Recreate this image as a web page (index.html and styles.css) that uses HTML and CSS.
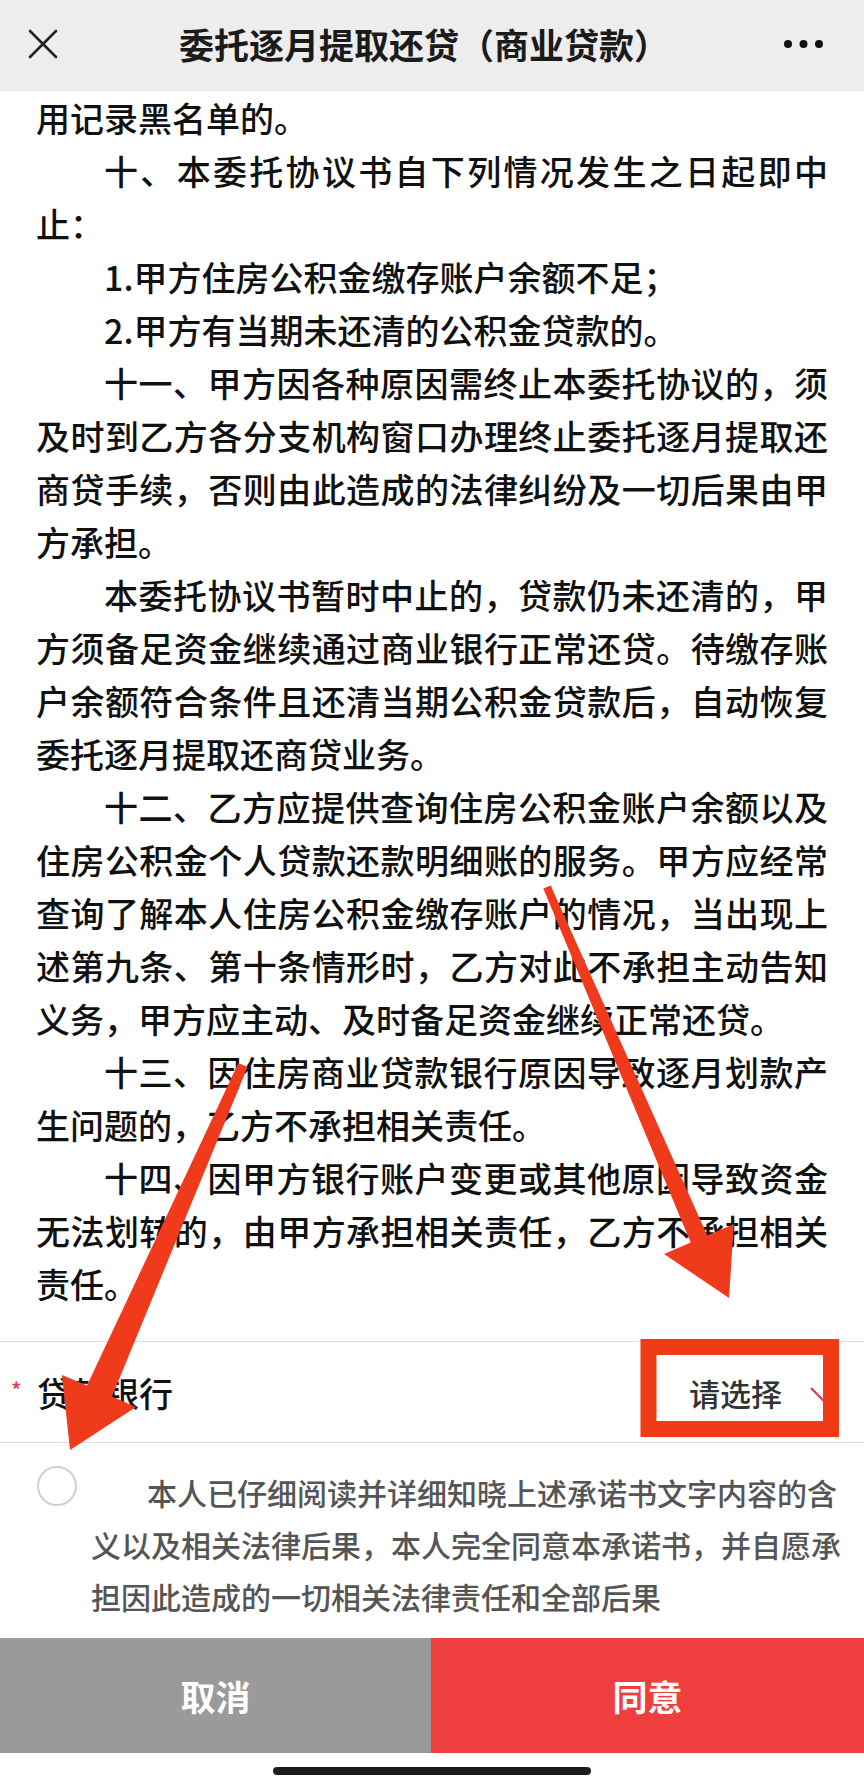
FILE: index.html
```html
<!DOCTYPE html>
<html lang="zh-CN">
<head>
<meta charset="utf-8">
<title>委托逐月提取还贷（商业贷款）</title>
<link rel="stylesheet" href="styles.css">
</head>
<body>
<div class="page">
  <header class="topbar">
    <svg class="close" viewBox="0 0 30 30" width="30" height="30"><path d="M2 2 L28 28 M28 2 L2 28" stroke="#222" stroke-width="2.6" stroke-linecap="round" fill="none"/></svg>
    <h1 class="title">委托逐月提取还贷（商业贷款）</h1>
    <svg class="more" viewBox="0 0 40 10" width="40" height="10"><circle cx="4" cy="5" r="4" fill="#111"/><circle cx="19.5" cy="5" r="4" fill="#111"/><circle cx="35" cy="5" r="4" fill="#111"/></svg>
  </header>

  <main class="content">
    <article class="terms">
      <p class="cont">用记录黑名单的。</p>
      <p>十、本委托协议书自下列情况发生之日起即中止：</p>
      <p>1.甲方住房公积金缴存账户余额不足；</p>
      <p>2.甲方有当期未还清的公积金贷款的。</p>
      <p>十一、甲方因各种原因需终止本委托协议的，须及时到乙方各分支机构窗口办理终止委托逐月提取还商贷手续，否则由此造成的法律纠纷及一切后果由甲方承担。</p>
      <p>本委托协议书暂时中止的，贷款仍未还清的，甲方须备足资金继续通过商业银行正常还贷。待缴存账户余额符合条件且还清当期公积金贷款后，自动恢复委托逐月提取还商贷业务。</p>
      <p>十二、乙方应提供查询住房公积金账户余额以及住房公积金个人贷款还款明细账的服务。甲方应经常查询了解本人住房公积金缴存账户的情况，当出现上述第九条、第十条情形时，乙方对此不承担主动告知义务，甲方应主动、及时备足资金继续正常还贷。</p>
      <p>十三、因住房商业贷款银行原因导致逐月划款产生问题的，乙方不承担相关责任。</p>
      <p>十四、因甲方银行账户变更或其他原因导致资金无法划转的，由甲方承担相关责任，乙方不承担相关责任。</p>
    </article>

    <div class="field-row">
      <div class="field-label"><span class="req">*</span>贷款银行</div>
      <div class="field-value">请选择
        <svg class="chev" viewBox="0 0 26 15" width="26" height="15"><path d="M1 1 L13 13 L25 1" stroke="#c9485a" stroke-width="2.4" fill="none"/></svg>
      </div>
    </div>

    <div class="agree">
      <span class="radio"></span>
      <p class="agree-text">本人已仔细阅读并详细知晓上述承诺书文字内容的含<br>义以及相关法律后果，本人完全同意本承诺书，并自愿承<br>担因此造成的一切相关法律责任和全部后果</p>
    </div>
  </main>

  <footer class="actions">
    <button class="btn btn-cancel">取消</button>
    <button class="btn btn-ok">同意</button>
  </footer>
  <div class="home-area"><span class="home-bar"></span></div>

  <svg class="annotations" viewBox="0 0 864 1788" width="864" height="1788">
    <polygon fill="#ef3b1c" points="543.3,888.6 690.7,1242.6 664.1,1254.1 729,1298 733.9,1223.9 707.3,1235.4 550.7,885.4"/>
    <polygon fill="#ef3b1c" points="238.4,1063 247.6,1067 112,1396.5 136,1407 70,1450 62,1375 87,1385.5"/>
    <rect x="648.5" y="1347" width="182.5" height="82" fill="none" stroke="#f03b16" stroke-width="16"/>
  </svg>
</div>
</body>
</html>
```

FILE: styles.css
```css
* { box-sizing: border-box; }

html, body {
  margin: 0;
  padding: 0;
  background: #ffffff;
}

body {
  font-family: "Noto Sans CJK SC", "Noto Sans", sans-serif;
  color: #111;
}

.page {
  position: relative;
  width: 864px;
  height: 1788px;
  overflow: hidden;
  display: flex;
  flex-direction: column;
}

.topbar {
  height: 91px;
  flex: none;
  background: #ededed;
  display: flex;
  align-items: center;
  padding: 0 40px 4px 28px;
  position: relative;
}

.close {
  display: block;
  flex: none;
}

.title {
  flex: 1;
  margin: 0 0 0 6px;
  text-align: center;
  font-size: 35px;
  font-weight: 700;
  color: #1b1b1b;
  line-height: 1;
}

.more {
  display: block;
  flex: none;
}

.content {
  flex: 1;
  display: flex;
  flex-direction: column;
}

.terms {
  padding: 0 36px 31px;
  font-size: 34px;
  font-weight: 500;
  line-height: 53px;
  color: #111;
  text-align: justify;
}

.terms p {
  margin: 0;
  text-indent: 2em;
}

.terms p.cont {
  text-indent: 0;
}

.field-row {
  height: 102px;
  border-top: 1px solid #dcdcdc;
  border-bottom: 1px solid #dcdcdc;
  display: flex;
  align-items: center;
  justify-content: space-between;
  padding: 0 28px 0 11px;
}

.field-label {
  font-size: 34px;
  font-weight: 500;
  color: #111;
  display: flex;
  align-items: center;
}

.req {
  color: #e0404e;
  font-size: 22px;
  width: 26px;
  position: relative;
  top: -3px;
}

.field-value {
  font-size: 31px;
  font-weight: 500;
  color: #333;
  display: flex;
  align-items: center;
  gap: 28px;
}

.chev {
  display: block;
  position: relative;
  top: 2px;
}

.agree {
  display: flex;
  align-items: flex-start;
  gap: 14px;
  padding: 23px 0 0 37px;
  height: 195px;
}

.radio {
  flex: none;
  width: 40px;
  height: 40px;
  border-radius: 50%;
  border: 2px solid #cfcfcf;
}

.agree-text {
  margin: 0;
  width: 770px;
  flex: none;
  font-size: 30px;
  font-weight: 500;
  line-height: 52px;
  color: #555;
  text-indent: 56px;
  white-space: nowrap;
}

.actions {
  height: 115px;
  flex: none;
  display: grid;
  grid-template-columns: 431px 1fr;
}

.btn {
  border: 0;
  margin: 0;
  padding: 0;
  font-family: inherit;
  font-size: 35px;
  font-weight: 700;
  color: #fff;
  cursor: pointer;
}

.btn-cancel { background: #9a9a9a; }
.btn-ok { background: #ef3e3e; }

.home-area {
  height: 35px;
  flex: none;
  display: flex;
  justify-content: center;
  padding-top: 14px;
}

.home-bar {
  display: block;
  width: 318px;
  height: 8px;
  border-radius: 4px;
  background: #1c1c1c;
}

.annotations {
  position: absolute;
  left: 0;
  top: 0;
  pointer-events: none;
}
```
